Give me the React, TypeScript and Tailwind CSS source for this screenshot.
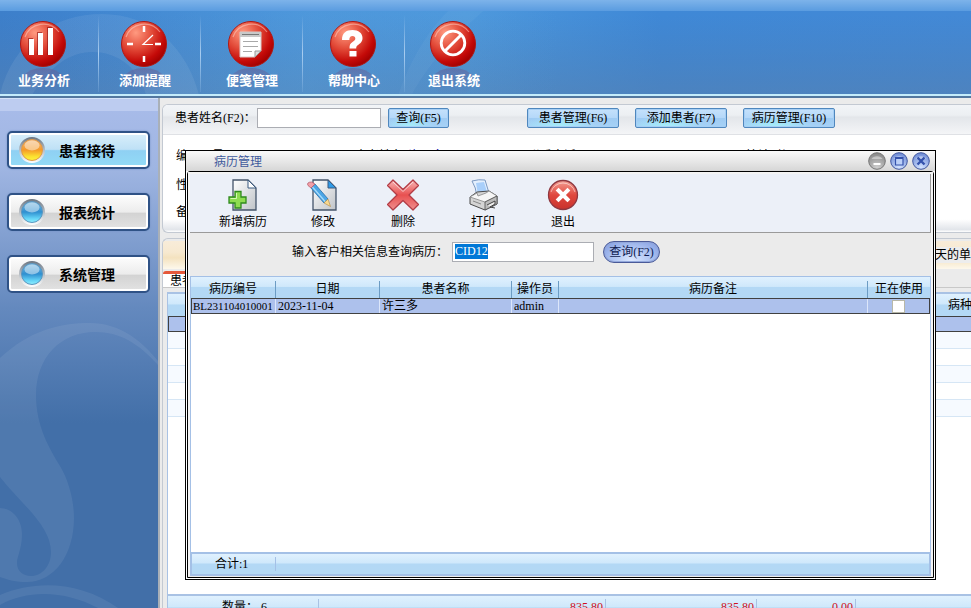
import { useEffect, useRef, type ReactNode } from 'react';

const FONT = "font-['Liberation_Serif','Noto_Sans_CJK_SC',sans-serif]";
const GRID_HEAD = 'bg-[linear-gradient(#e0f1fe_0%,#cfe8fb_45%,#b3d8f5_50%,#b3d8f4_100%)]';

function Orb({ children }: { children: ReactNode }) {
  return (
    <svg width="48" height="48" viewBox="0 0 48 48" className="overflow-visible" aria-hidden="true">
      <defs>
        <radialGradient id="redOrb" cx="0.32" cy="0.25" r="0.8">
          <stop offset="0" stopColor="#ff9a80" />
          <stop offset="0.45" stopColor="#e24a38" />
          <stop offset="0.8" stopColor="#c40a08" />
          <stop offset="1" stopColor="#a00000" />
        </radialGradient>
        <linearGradient id="orbShadow" x1="0" y1="0" x2="0" y2="1">
          <stop offset="0" stopColor="#6a5a90" stopOpacity="0.55" />
          <stop offset="1" stopColor="#5c7ab8" stopOpacity="0.05" />
        </linearGradient>
      </defs>
      <path d="M3 57Q10 48 24 48T45 57Q44 68 36 74H12Q4 68 3 57Z" fill="url(#orbShadow)" />
      <circle cx="24" cy="24" r="22.500" fill="url(#redOrb)" stroke="#b01812" />
      <path d="M6 17A19.500 19.500 0 0 1 40 12" fill="none" stroke="#ffd8cc" strokeOpacity="0.5" strokeWidth="1.200" />
      {children}
    </svg>
  );
}

const menu = [
  {
    label: '业务分析',
    icon: (
      <g>
        <path d="M9 18h5v17H9zM18 12h5v23h-5zM28 7h5v28h-5z" fill="#8c1010" opacity="0.6" />
        <path d="M10 19h5v16h-5zM19 13h5v22h-5zM29 8h5v27h-5z" fill="#fff" />
      </g>
    ),
  },
  {
    label: '添加提醒',
    icon: (
      <g stroke="#fff" fill="none">
        <path d="M24 6v6M24 36v6" strokeWidth="2.500" />
        <path d="M7 24h6M35 24h6" strokeWidth="2.500" />
        <path d="M33 15 23 24.500h10" strokeWidth="1.200" />
      </g>
    ),
  },
  {
    label: '便笺管理',
    icon: (
      <g>
        <path d="M13 12h21v19l-6 6H13z" fill="#fff" stroke="#d8c8c8" />
        <path d="M13 12h21v5H13z" fill="#c9c9c9" />
        <path d="M15 14.500h17" stroke="#777" />
        <path d="M16 21.500h15M16 26.500h15M16 31.500h9" stroke="#a8a8a8" strokeWidth="1.200" />
        <path d="M34 31h-6v6z" fill="#ddd" stroke="#999" />
      </g>
    ),
  },
  {
    label: '帮助中心',
    icon: (
      <g>
        <path d="M13 20c0-7 4-10 10.500-10 6 0 10 3 10 8 0 4-2.500 5.500-4.500 7-1.500 1-1.800 2-1.800 3.500h-6.700c0-3.500.5-5 3-6.500 2-1.300 2.800-2 2.800-3.500 0-1.500-1-2.500-2.800-2.500-2.200 0-3.200 1.500-3.200 4z" fill="#fff" />
        <path d="M20.500 31h7v5.500h-7z" fill="#fff" />
      </g>
    ),
  },
  {
    label: '退出系统',
    icon: (
      <g stroke="#fff" fill="none">
        <circle cx="24" cy="23" r="11.800" strokeWidth="2.800" />
        <path d="M16 31 32 15" strokeWidth="3" />
      </g>
    ),
  },
];

function Header() {
  return (
    <header className="relative h-[98px] shrink-0 border-b-2 border-[#52779f] bg-[linear-gradient(90deg,#3d7fca_0%,#4690da_30%,#4c97dc_48%,#3f88d6_68%,#4389d6_100%)]">
      <svg className="absolute inset-0 h-full w-full" viewBox="0 0 971 98" preserveAspectRatio="xMinYMin slice" aria-hidden="true">
        <defs>
          <linearGradient id="headShade" x1="0" y1="0" x2="0" y2="1">
            <stop offset="0.15" stopColor="#4a7ab0" stopOpacity="0" />
            <stop offset="1" stopColor="#567fae" stopOpacity="0.6" />
          </linearGradient>
          <linearGradient id="headGlow" x1="0" y1="0" x2="1" y2="0">
            <stop offset="0" stopColor="#60a8dc" stopOpacity="0" />
            <stop offset="0.5" stopColor="#60a8dc" stopOpacity="0.3" />
            <stop offset="1" stopColor="#60a8dc" stopOpacity="0" />
          </linearGradient>
        </defs>
        <rect width="1300" height="98" fill="url(#headShade)" />
        <rect x="60" y="11" width="500" height="87" fill="url(#headGlow)" />
        <path d="M0 94C14 40 55 14 102 14c50 0 85 34 97 81h-53C140 70 120 52 92 52c-22 0-42 14-60 43H0z" fill="#fff" fillOpacity="0.07" />
        <path d="M398 96C410 60 430 25 460 0h36c-25 22-60 50-85 96z" fill="#fff" fillOpacity="0.04" />
      </svg>
      <div className="relative flex h-full flex-col border-b-2 border-[#c4ecfb]">
        <div className="h-[11px] shrink-0 bg-[linear-gradient(#7db3ea,#5a9ce0)]" />
        <nav className="flex flex-1">
          {menu.map((m, i) => (
            <button
              key={m.label}
              className={`relative flex flex-col items-center pt-[9px] ${i === 0 ? 'w-[98px] pr-[12px]' : 'w-[102px]'} ${i === 1 ? 'pr-[10px]' : ''} ${i === 4 ? 'pr-[4px]' : ''}`}
            >
              {i > 0 && <span className="absolute top-[4px] bottom-[2px] left-0 w-px bg-[linear-gradient(#8ebdea00,#a9cdf0,#8ebdea30)]" />}
              <Orb>{m.icon}</Orb>
              <span className="relative pt-[4px] pl-[2px] text-[13px] leading-[18px] font-bold text-white">{m.label}</span>
            </button>
          ))}
        </nav>
      </div>
    </header>
  );
}

function Bead({ on }: { on: boolean }) {
  return (
    <svg width="26" height="28" viewBox="0 0 26 28" aria-hidden="true">
      <defs>
        <linearGradient id="beadOn" x1="0" y1="0" x2="0" y2="1">
          <stop offset="0" stopColor="#f5b878" />
          <stop offset="0.5" stopColor="#f59a28" />
          <stop offset="0.8" stopColor="#fbe030" />
          <stop offset="1" stopColor="#fff53a" />
        </linearGradient>
        <linearGradient id="beadOff" x1="0" y1="0" x2="0" y2="1">
          <stop offset="0" stopColor="#7fbbe0" />
          <stop offset="0.5" stopColor="#2f8fd0" />
          <stop offset="0.8" stopColor="#62d2f6" />
          <stop offset="1" stopColor="#8ff0ff" />
        </linearGradient>
        <linearGradient id="beadRim" x1="0" y1="0" x2="0" y2="1">
          <stop offset="0" stopColor="#6c7682" />
          <stop offset="0.6" stopColor="#c4cad0" />
          <stop offset="1" stopColor="#ffffff" />
        </linearGradient>
      </defs>
      <circle cx="13" cy="14" r="13" fill="url(#beadRim)" />
      <circle cx="13" cy="14" r="10.500" fill={on ? 'url(#beadOn)' : 'url(#beadOff)'} stroke={on ? '#e09a4a' : '#5a96c0'} />
      <ellipse cx="13" cy="9.500" rx="7.500" ry="5" fill="#fff" fillOpacity="0.45" />
    </svg>
  );
}

function Sidebar() {
  const items = ['患者接待', '报表统计', '系统管理'];
  return (
    <aside className="relative w-[160px] shrink-0 overflow-hidden border-r-2 border-[#a9b0b8] bg-[linear-gradient(#a9bcea_0px,#9fb5e2_70px,#6489be_210px,#426fa8_325px,#426fa8_100%)]">
      <svg className="absolute inset-x-0 top-0" width="158" height="510" viewBox="0 98 158 510" aria-hidden="true">
        <g fill="#fff" fillOpacity="0.07" fillRule="evenodd">
          <path d="M0 358C30 330 60 323 90 323c30 0 52 18 68 38v4c-20-22-38-33-63-33-34 0-59 25-59 63 0 32 14 54 24 71 9 15 14 35 14 52 0 37-20 64-47 64-11 0-19-2-27-5zM0 477v31c11 0 22 10 22 26 0 15-5 22-5 29 0 8 6 13 14 13 11 0 20-10 20-24 0-27-31-49-51-75z" />
          <path d="M0 595c35-15 80-14 118 13H98c-30-16-68-20-98-3z" />
        </g>
      </svg>
      <div className="relative h-[13px] border-t border-[#d5e2f8] bg-[#bdccf0]" />
      <nav className="relative flex flex-col gap-[24px] px-[7px] pt-[20px]">
        {items.map((t, i) => (
          <button
            key={t}
            className={`flex h-[38px] w-[143px] items-center rounded-[5px] border-2 border-[#2f5286] pl-[10px] shadow-[inset_0_0_0_2px_#ffffff,0_0_2px_#6f8fc0] ${
              i === 0
                ? 'bg-[linear-gradient(#d9effb_0%,#bfe1f6_48%,#8fd0f3_52%,#93dcf6_100%)]'
                : 'bg-[linear-gradient(#fdfdfd_0%,#ececec_50%,#d3d3d3_54%,#e3e3e3_100%)]'
            }`}
          >
            <Bead on={i === 0} />
            <span className="pt-[4px] pl-[14px] text-[14px] leading-[20px] font-bold text-black">{t}</span>
          </button>
        ))}
      </nav>
    </aside>
  );
}

function BlueButton({ children, wide }: { children: ReactNode; wide?: boolean }) {
  return (
    <button
      className={`h-[20px] rounded-[2px] border border-[#4f87bd] bg-[radial-gradient(ellipse_at_35%_100%,#a5f0fa_0%,#a5f0fa00_45%),linear-gradient(#c5e1fb_0%,#b5d8f9_48%,#9fcbf3_52%,#a6d2f6_100%)] text-[12px] leading-[16px] whitespace-nowrap shadow-[inset_0_0_0_1px_#a6cff5] ${wide ? 'w-[92px]' : 'w-[61px]'}`}
    >
      {children}
    </button>
  );
}

function PatientPanel() {
  return (
    <section className="mt-[6px] ml-[2px] h-[129px] shrink-0 overflow-hidden rounded-l-[6px] border border-r-0 border-[#c3c9d2] bg-[linear-gradient(#ffffff_90%,#e2e5ea_98%,#ffffff_100%)] text-[12px] leading-[16px]">
      <div className="flex h-[30px] items-center border-b border-[#dfe1e5] bg-[linear-gradient(#f2f4f7_0%,#eceff2_35%,#e3e6ea_42%,#f4f5f7_100%)] pb-[3px] pl-[12px]">
        <label htmlFor="patient" className="w-[82px] whitespace-nowrap">患者姓名(F2)：</label>
        <input id="patient" className="h-[20px] w-[124px] border border-[#abadb3] bg-white px-[2px] outline-none" />
        <div className="flex items-center pl-[7px]">
          <BlueButton>查询(F5)</BlueButton>
        </div>
        <div className="flex gap-[16px] pl-[78px]">
          <BlueButton wide>患者管理(F6)</BlueButton>
          <BlueButton wide>添加患者(F7)</BlueButton>
          <BlueButton wide>病历管理(F10)</BlueButton>
        </div>
      </div>
      <div className="flex h-[35px] items-center pt-[6px] pl-[13px]">
        <span className="w-[36px]">编</span>
        <span className="w-[143px]">号</span>
        <span className="w-[53px]">患者姓名</span>
        <span className="w-[120px] text-[#0000a0]">许三多</span>
        <span className="w-[218px]">联系电话</span>
        <span className="w-[54px]">接诊时间</span>
      </div>
      <div className="pt-[7px] pl-[13px]">性</div>
      <div className="pt-[11px] pl-[13px]">备</div>
    </section>
  );
}

function VisitPanel() {
  return (
    <section className="mt-[5px] ml-[2px] flex min-h-0 flex-1 flex-col overflow-hidden rounded-tl-[6px] border-t border-l border-[#c3c9d2] bg-[#ebebeb] text-[12px] leading-[16px]">
      <div className="mt-[2px] flex h-[28px] shrink-0 items-center justify-end overflow-hidden bg-[linear-gradient(#f8ecd9_0%,#f7e9d0_40%,#f4e2bf_60%,#fdf8ec_100%)]">
        <span className="-mr-[12px] bg-[#ededed] whitespace-nowrap">天的单据</span>
      </div>
      <div className="flex h-[19px] shrink-0 items-end border-b border-[#c8c8c8]">
        <button className="h-[16px] rounded-t-[3px] border-t-[3px] border-[#e5583a] bg-white px-[7px] leading-[14px]">患者列表</button>
      </div>
      <div className="ml-[4px] flex min-h-0 flex-1 flex-col pt-[4px]">
        <div className="flex min-h-0 flex-1 flex-col border-t-2 border-l border-[#a9c2e4] bg-white">
          <table className="w-full table-fixed border-separate border-spacing-0">
            <thead>
              <tr className={`h-[22px] ${GRID_HEAD}`}>
                <th className="w-[780px] p-0" />
                <th className="p-0 text-right font-normal whitespace-nowrap">病种</th>
              </tr>
            </thead>
            <tbody>
              <tr className="h-[16px]">
                <td className="border-y border-l border-[#404040] bg-[#adc1ec] p-0" />
                <td className="border-y border-[#404040] bg-[#adc1ec] p-0" />
              </tr>
              {[0, 1, 2, 3, 4].map((r) => (
                <tr key={r} className="h-[17px] odd:bg-white even:bg-[#f6faff]">
                  <td className="border-b border-[#d6e6f5] p-0" />
                  <td className="border-b border-[#d6e6f5] p-0" />
                </tr>
              ))}
            </tbody>
          </table>
          <div className="flex-1" />
          <div className={`flex h-[14px] shrink-0 items-start overflow-hidden border-t-2 border-[#a9c2e4] ${GRID_HEAD} bg-[length:100%_24px]`}>
            <span className="mt-[3px] w-[151px] border-r border-[#a9c2e4] pl-[54px] whitespace-pre">数量： 6</span>
            <span className="mt-[3px] w-[287px] border-r border-[#a9c2e4] pr-[2px] text-right text-[#d01020]">835.80</span>
            <span className="mt-[3px] w-[151px] border-r border-[#a9c2e4] pr-[2px] text-right text-[#d01020]">835.80</span>
            <span className="mt-[3px] w-[99px] border-r border-[#a9c2e4] pr-[2px] text-right text-[#d01020]">0.00</span>
          </div>
        </div>
      </div>
    </section>
  );
}

function Page({ blueFold }: { blueFold?: boolean }) {
  return (
    <g>
      <path d="M6 1h15l8 8v22H6z" fill="url(#sheet)" stroke="#44546a" strokeWidth="1.300" />
      <path d="M21 1v8h8z" fill={blueFold ? '#2f9be8' : '#fff'} stroke="#3a5a80" />
    </g>
  );
}

const tools = [
  {
    label: '新增病历',
    icon: (
      <g>
        <Page />
        <path d="M8 12.500h6v5.500h5v6h-5v5H8v-5H2v-6h6z" fill="#8edc50" stroke="#2f8a1c" strokeWidth="1.300" />
        <path d="M9.500 14v5.500h-6" fill="none" stroke="#d5f8b4" />
      </g>
    ),
  },
  {
    label: '修改',
    icon: (
      <g>
        <Page blueFold />
        <path d="m4 9 4-4 13 15-4 4z" fill="#4ba6e6" stroke="#2a6fa8" strokeWidth="0.800" />
        <path d="m5.500 8 13 15" stroke="#a9dcfa" strokeWidth="1.200" />
        <path d="M4 9 1 6.500Q0 5 1 4T4.500 3L8 5z" fill="#f2a0a8" stroke="#b86070" strokeWidth="0.800" />
        <path d="m17 24 4-4 2.500 7.500z" fill="#f8d890" stroke="#b08840" strokeWidth="0.600" />
      </g>
    ),
  },
  {
    label: '删除',
    icon: (
      <g>
        <path d="M6 1 16 10.500 26 1l5.500 5.500L22 16l9.500 9.500L26 31l-10-9.500L6 31 .5 25.500 10 16 .5 6.500z" fill="url(#redX)" stroke="#b23c46" strokeWidth="1.300" strokeLinejoin="round" />
        <path d="m6 3 10 9.500L26 3" fill="none" stroke="#fff" strokeOpacity="0.6" />
      </g>
    ),
  },
  {
    label: '打印',
    icon: (
      <g strokeLinejoin="round">
        <path d="M5 2q7-2 13-1l4 13-12 4Q9 8 5 2z" fill="#e4f0fe" stroke="#7b98c0" />
        <path d="M9 4l8-1 3 10-9 3z" fill="#a9cffa" />
        <path d="m3 18 7-5 12-1 8 5v8l-12 6-15-6z" fill="#d4d4d4" stroke="#4c4c4c" />
        <path d="m3 18 15 5 12-6-8-5-3 2-8 3-1-3z" fill="#f6f6f6" stroke="#888" strokeWidth="0.800" />
        <path d="m18 23 12-6v8l-12 6z" fill="#bcbcbc" stroke="#4c4c4c" strokeWidth="0.800" />
        <path d="m20 26 8-4v3l-5 3 5 1" fill="#eee" stroke="#333" strokeWidth="0.900" />
        <path d="m6 22 8 3" stroke="#888" />
      </g>
    ),
  },
  {
    label: '退出',
    icon: (
      <g>
        <circle cx="16" cy="16" r="14.500" fill="url(#redX2)" stroke="#8e3840" strokeWidth="1.300" />
        <path d="M4 13A12.500 12.500 0 0 1 28 13" fill="none" stroke="#fff" strokeOpacity="0.5" />
        <path d="m11.500 11.500 9 9M20.500 11.500l-9 9" stroke="#fff" strokeWidth="4" strokeLinecap="square" />
      </g>
    ),
  },
];

function WinButton({ kind }: { kind: 'min' | 'max' | 'close' }) {
  const grey = kind === 'min';
  const names = { min: '最小化', max: '最大化', close: '关闭' };
  return (
    <button aria-label={names[kind]}>
      <svg width="18" height="18" viewBox="0 0 18 18" aria-hidden="true">
        <defs>
          <radialGradient id="wGrey" cx="0.5" cy="0.9" r="0.9">
            <stop offset="0" stopColor="#d0d0d0" />
            <stop offset="1" stopColor="#858585" />
          </radialGradient>
          <radialGradient id="wBlue" cx="0.5" cy="0.9" r="0.9">
            <stop offset="0" stopColor="#d5e4ff" />
            <stop offset="1" stopColor="#6a88d4" />
          </radialGradient>
        </defs>
        <circle cx="9" cy="9" r="8.300" fill={grey ? 'url(#wGrey)' : 'url(#wBlue)'} stroke={grey ? '#777' : '#4258a0'} />
        <path d="M3.500 7a6 4.500 0 0 1 11 0z" fill="#fff" fillOpacity="0.4" />
        {kind === 'min' && <path d="M5.500 12h7" stroke="#fff" strokeWidth="2" />}
        {kind === 'max' && <path d="M5.500 5.500h7.500v7.500H5.500zM5.500 6.500H13" fill="#bcd0f8" stroke="#3452ac" strokeWidth="1.200" />}
        {kind === 'close' && <path d="m5.500 5.500 7 7M12.500 5.500l-7 7" stroke="#3452ac" strokeWidth="2.400" />}
      </svg>
    </button>
  );
}

const columns = [
  { title: '病历编号', width: 'w-[85px]' },
  { title: '日期', width: 'w-[104px]' },
  { title: '患者名称', width: 'w-[132px]' },
  { title: '操作员', width: 'w-[47px]' },
  { title: '病历备注', width: '' },
  { title: '正在使用', width: 'w-[62px]' },
];

function RecordsDialog() {
  const query = useRef<HTMLInputElement>(null);
  useEffect(() => {
    query.current?.focus();
    query.current?.select();
  }, []);
  const cell = 'overflow-hidden border-y border-[#404040] bg-[#adc1ec] py-0 whitespace-nowrap';
  const divider = 'shadow-[inset_-1px_0_0_#dce6fa]';
  return (
    <div
      role="dialog"
      aria-label="病历管理"
      className="absolute top-[150px] right-[35px] bottom-[28px] left-[185px] flex flex-col border border-black bg-white text-[12px] leading-[14px]"
    >
      <div className="flex h-[20px] shrink-0 items-center justify-between bg-[linear-gradient(#fafafa,#d6d6d6)] pr-[5px] pl-[28px]">
        <h1 className="pt-[2px] text-[12px] leading-[16px] text-[#3f5a9c]">病历管理</h1>
        <div className="flex gap-[4px]">
          <WinButton kind="min" />
          <WinButton kind="max" />
          <WinButton kind="close" />
        </div>
      </div>
      <div className="mx-px mb-px flex min-h-0 flex-1 flex-col rounded-t-[3px] border border-black bg-[#ebebeb] pb-px">
        <div className="flex min-h-0 flex-1 flex-col border-t-2 border-r-2 border-l-2 border-[#f4f4f4]">
          <div className="flex h-[59px] shrink-0 border-r border-b border-[#9a9a9a] bg-[#ecf0f8] pl-[13px]">
            {tools.map((t) => (
              <button key={t.label} className="flex w-[80px] flex-col items-center pt-[5px]">
                <svg width="32" height="32" viewBox="0 0 32 32" aria-hidden="true">
                  <defs>
                    <linearGradient id="sheet" x1="0" y1="0" x2="1" y2="1">
                      <stop offset="0" stopColor="#fff" />
                      <stop offset="1" stopColor="#bfc3c8" />
                    </linearGradient>
                    <linearGradient id="redX" x1="0" y1="0" x2="0" y2="1">
                      <stop offset="0" stopColor="#f8b8b8" />
                      <stop offset="0.5" stopColor="#e85050" />
                      <stop offset="1" stopColor="#f09090" />
                    </linearGradient>
                    <linearGradient id="redX2" x1="0" y1="0" x2="0" y2="1">
                      <stop offset="0" stopColor="#f4a094" />
                      <stop offset="0.5" stopColor="#e0483e" />
                      <stop offset="1" stopColor="#c8322c" />
                    </linearGradient>
                  </defs>
                  {t.icon}
                </svg>
                <span className="pt-[4px]">{t.label}</span>
              </button>
            ))}
          </div>
          <div className="flex h-[43px] shrink-0 items-center pb-[5px] pl-[102px]">
            <label htmlFor="query" className="w-[160px] whitespace-nowrap">输入客户相关信息查询病历：</label>
            <input
              id="query"
              ref={query}
              defaultValue="CID12"
              className="h-[20px] w-[142px] border border-[#abadb3] bg-white px-[2px] pb-[2px] outline-none selection:bg-[#0078d7] selection:text-white"
            />
            <button className="ml-[9px] h-[22px] w-[57px] rounded-full border border-[#4a5a98] bg-[radial-gradient(ellipse_at_50%_90%,#dce8ff_0%,#a9bff0_55%,#7d98de_100%)] whitespace-nowrap text-[#101c50] shadow-[inset_0_0_0_1px_#93a8dc]">
              查询(F2)
            </button>
          </div>
          <div className="flex min-h-0 flex-1 flex-col border border-b-0 border-[#a4c0e6] bg-white">
            <table className="w-full table-fixed border-separate border-spacing-0">
              <thead>
                <tr className={GRID_HEAD}>
                  {columns.map((c, i) => (
                    <th key={c.title} className={`h-[21px] p-0 align-bottom font-normal ${c.width}`}>
                      <div className={`h-[17px] leading-[16px] ${i < 5 ? 'border-r border-[#6c9cc4]' : ''}`}>{c.title}</div>
                    </th>
                  ))}
                </tr>
              </thead>
              <tbody>
                <tr>
                  <td className={`${cell} ${divider} border-l px-px text-[11px]`}>BL231104010001</td>
                  <td className={`${cell} ${divider} px-[2px]`}>2023-11-04</td>
                  <td className={`${cell} ${divider} px-[2px]`}>许三多</td>
                  <td className={`${cell} ${divider} px-[2px]`}>admin</td>
                  <td className={`${cell} ${divider} px-[2px]`} />
                  <td className={`${cell} border-r px-[2px]`}>
                    <input type="checkbox" aria-label="正在使用" className="mx-auto block h-[13px] w-[13px] appearance-none border border-[#b8b8a8] bg-white" />
                  </td>
                </tr>
              </tbody>
            </table>
            <div className="flex-1" />
          </div>
          <div className={`flex h-[24px] shrink-0 items-center border-2 border-[#a4c0e6] ${GRID_HEAD}`}>
            <span className="w-[84px] border-r border-[#a4c0e6] pl-[23px]">合计:1</span>
          </div>
        </div>
      </div>
    </div>
  );
}

export default function App() {
  return (
    <div className={`relative flex h-screen flex-col overflow-hidden bg-[#ebebeb] text-black ${FONT}`}>
      <Header />
      <div className="flex min-h-0 flex-1">
        <Sidebar />
        <main className="flex min-w-0 flex-1 flex-col">
          <PatientPanel />
          <VisitPanel />
        </main>
      </div>
      <RecordsDialog />
    </div>
  );
}
